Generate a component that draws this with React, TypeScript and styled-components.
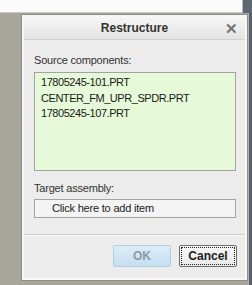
import styled, { createGlobalStyle } from 'styled-components'

const GlobalStyle = createGlobalStyle`
    *, *::before, *::after {
        box-sizing: border-box;
    }
    html, body {
        margin: 0;
        padding: 0;
        background: #a8a69a;
        font-family: "Liberation Sans", Arial, sans-serif;
    }
`

const Screen = styled.div`
    width: 252px;
    height: 285px;
    overflow: hidden;
    display: flex;
    flex-direction: column;
    background: #a8a69a;
`

const TopWindow = styled.div`
    height: 13px;
    flex-shrink: 0;
    display: flex;
`

const TopWhite = styled.div`
    width: 243px;
    background: #fbfbfb;
    border-bottom: 1px solid #c9c9c4;
    border-right: 1px solid #b8b8b8;
`

const DarkStrip = styled.div`
    flex: 1;
    background: #5d6873;
`

const Desk = styled.div`
    flex: 1;
    display: flex;
    padding-top: 1px;
`

const LeftGap = styled.div`
    width: 21px;
    flex-shrink: 0;
`

const Dialog = styled.div`
    width: 227px;
    height: 267px;
    border: 1px solid #8d8d8d;
    background: #ebeceb;
    display: flex;
    flex-direction: column;
    box-shadow: inset 0 0 0 2px #f6f7f6;
`

const RightEdge = styled.div`
    width: 4px;
    margin-top: -1px;
    background: linear-gradient(to right, #b3b3ae 0, #b3b3ae 1px, #56616d 1px);
`

const TitleBar = styled.div`
    height: 23px;
    flex-shrink: 0;
    position: relative;
    display: flex;
    align-items: center;
    justify-content: center;
    background: linear-gradient(#f6f6f6, #e3e4e3);
    border-bottom: 1px solid #d2d3d2;
    margin: 2px 2px 0 2px;
    font-size: 12px;
    font-weight: bold;
    color: #333;
`

const Close = styled.span`
    position: absolute;
    right: 7px;
    top: 3px;
    font-size: 15px;
    font-weight: bold;
    color: #747474;
`

const Body = styled.div`
    flex: 1;
    display: flex;
    flex-direction: column;
    padding: 12px 11px 0 12px;
`

const Label = styled.div`
    font-size: 11px;
    letter-spacing: -0.2px;
    color: #333;
    height: 16px;
    line-height: 16px;
    margin-bottom: 4px;
`

const ListBox = styled.div`
    height: 99px;
    flex-shrink: 0;
    border: 1px solid #a3a3a3;
    background: #e6f9d8;
    padding: 2px 0 0 6px;
    margin-bottom: 9px;
`

const Item = styled.div`
    font-size: 11px;
    color: #1a1a1a;
    height: 15.5px;
    line-height: 15.5px;
    letter-spacing: -0.45px;
`

const Picker = styled.div`
    height: 19px;
    flex-shrink: 0;
    margin-top: -1px;
    border: 1px solid #a3a3a3;
    background: #f4f4f4;
    padding-left: 17px;
    font-size: 11px;
    letter-spacing: -0.2px;
    line-height: 17px;
    color: #222;
`

const Footer = styled.div`
    height: 44px;
    flex-shrink: 0;
    border-top: 1px solid #cfd0cf;
    box-shadow: inset 0 1px 0 #f8f8f8;
    margin: 0 2px 2px 2px;
    display: flex;
    justify-content: flex-end;
    align-items: flex-start;
    gap: 8px;
    padding: 10px 8px 0 0;
`

const Button = styled.button<{ primary?: boolean }>`
    width: 58px;
    height: 22px;
    padding: 0;
    font-family: "Liberation Sans", Arial, sans-serif;
    font-size: 12px;
    font-weight: bold;
    border-radius: 2px;
    color: ${(p) => (p.primary ? '#8b9aa6' : '#1e1e1e')};
    background: ${(p) => (p.primary ? 'linear-gradient(#dcedf8, #c5def0)' : 'linear-gradient(#f7f7f7, #e9e9e9)')};
    border: 1px solid ${(p) => (p.primary ? '#b1cde0' : '#6f6f6f')};
    outline: ${(p) => (p.primary ? 'none' : '1px dotted #222')};
    outline-offset: -3px;
`

export default function App() {
    return (
        <>
            <GlobalStyle />
            <Screen>
                <TopWindow>
                    <TopWhite />
                    <DarkStrip />
                </TopWindow>
                <Desk>
                    <LeftGap />
                    <Dialog>
                        <TitleBar>
                            Restructure
                            <Close>✕</Close>
                        </TitleBar>
                        <Body>
                            <Label>Source components:</Label>
                            <ListBox>
                                <Item>17805245-101.PRT</Item>
                                <Item>CENTER_FM_UPR_SPDR.PRT</Item>
                                <Item>17805245-107.PRT</Item>
                            </ListBox>
                            <Label>Target assembly:</Label>
                            <Picker>Click here to add item</Picker>
                        </Body>
                        <Footer>
                            <Button primary>OK</Button>
                            <Button>Cancel</Button>
                        </Footer>
                    </Dialog>
                    <RightEdge />
                </Desk>
            </Screen>
        </>
    )
}
